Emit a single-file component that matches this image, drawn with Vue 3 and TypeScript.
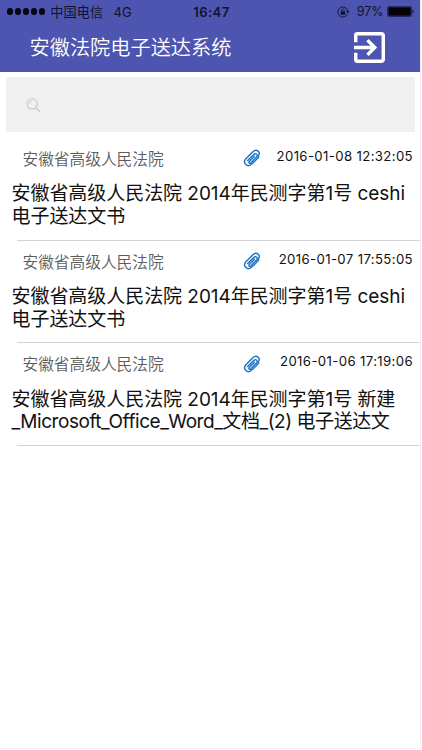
<script setup lang="ts">
interface Line {
  text: string
  tight?: boolean
}
interface Notice {
  court: string
  time: string
  lines: Line[]
}

const court = '安徽省高级人民法院'
const ceshi: Line[] = [{ text: '安徽省高级人民法院 2014年民测字第1号 ceshi' }, { text: '电子送达文书' }]
const notices: Notice[] = [
  { court, time: '2016-01-08 12:32:05', lines: ceshi },
  { court, time: '2016-01-07 17:55:05', lines: ceshi },
  {
    court,
    time: '2016-01-06 17:19:06',
    lines: [
      { text: '安徽省高级人民法院 2014年民测字第1号 新建' },
      { text: '_Microsoft_Office_Word_文档_(2) 电子送达文', tight: true },
    ],
  },
]
</script>

<template>
  <div class="screen">
    <header class="header">
      <div class="status">
        <div class="status-left">
          <span class="signal"><i v-for="n in 5" :key="n" class="dot"></i></span>
          <span class="carrier">中国电信</span>
          <span class="network">4G</span>
        </div>
        <span class="clock">16:47</span>
        <div class="status-right">
          <svg class="lock" viewBox="0 0 13 12" fill="none" stroke="#11132e">
            <path d="M10.6 7.6A5 5 0 1 1 10.8 5.2" stroke-width="0.9" />
            <path d="M9.3 5h3.2l-1.6 2.3z" fill="#11132e" stroke="none" />
            <rect x="3.7" y="5.3" width="4.4" height="3.4" rx="0.4" fill="#11132e" stroke="none" />
            <path d="M4.6 5.5V4.3a1.3 1.3 0 0 1 2.6 0v1.2" stroke-width="0.8" />
          </svg>
          <span class="percent">97%</span>
          <svg class="battery" viewBox="0 0 28 11">
            <rect x="0.4" y="0.4" width="24.2" height="10.2" rx="1.8" fill="none" stroke="#11132e" stroke-width="0.7" />
            <rect x="1.3" y="1.3" width="22.4" height="8.4" rx="0.9" fill="#020208" />
            <path d="M25.5 3.7c1.7.4 1.7 3.2 0 3.6z" fill="#11132e" />
          </svg>
        </div>
      </div>
      <div class="titlebar">
        <h1 class="title">安徽法院电子送达系统</h1>
        <svg class="exit" viewBox="3 3 18 18" fill="#fff">
          <path d="M10.09 15.59L11.5 17l5-5-5-5-1.41 1.41L12.67 11H3v2h9.67l-2.58 2.59zM19 3H5a2 2 0 0 0-2 2v4h2V5h14v14H5v-4H3v4a2 2 0 0 0 2 2h14c1.1 0 2-.9 2-2V5c0-1.1-.9-2-2-2z" />
        </svg>
      </div>
    </header>

    <div class="search">
      <svg class="magnifier" viewBox="0 0 16 16" fill="none" stroke="#c6c1c3">
        <circle cx="6.6" cy="6.3" r="5.5" stroke-width="1.1" />
        <path d="M10.5 10.2l4.3 4.3" stroke-width="1.3" />
        <path d="M3.4 6.2a3.3 3.3 0 0 1 2.9-2.9" stroke-width="0.8" />
      </svg>
    </div>

    <ul class="list">
      <li v-for="(n, i) in notices" :key="i" class="item">
        <div class="meta">
          <span class="court">{{ n.court }}</span>
          <svg class="clip" viewBox="0 0 18 18" fill="none" stroke="#1b72c2" stroke-width="1.4" stroke-linecap="round" stroke-linejoin="round">
            <path d="M4.2 10.8l6-6.1c2.1-2 4.7.4 2.9 2.4l-5.8 6c-1.2 1.1-2.6-.2-1.5-1.4l5.1-5.2" transform="translate(0.5 0.8)" />
            <path d="M15.8 8.1l-7 7c-4.2 4-9.6-1.1-5.9-5.3l7-7.1c4-3.6 8.4 1 5.1 4.7" />
          </svg>
          <span class="time">{{ n.time }}</span>
        </div>
        <div class="subject">
          <div v-for="(line, k) in n.lines" :key="k" class="line" :class="{ tight: line.tight }">{{ line.text }}</div>
        </div>
      </li>
    </ul>
  </div>
</template>

<style>
body {
  margin: 0;
  background: #fff;
}
</style>

<style scoped>
.screen {
  box-sizing: border-box;
  width: 421px;
  height: 749px;
  border-right: 1px solid #f3f3f8;
  border-bottom: 1px solid #f3f3f8;
  background: #fff;
  color: #111;
  font-family: Inter, "Noto Sans CJK SC", sans-serif;
  white-space: nowrap;
  overflow: hidden;
}
.header {
  height: 72px;
  background: #4d55b0;
}
.status {
  display: grid;
  grid-template-columns: 1fr auto 1fr;
  align-items: center;
  height: 23px;
  padding: 0 5px 0 7px;
  color: #11132e;
  font-size: 12.5px;
}
.status-left,
.status-right {
  display: flex;
  align-items: center;
}
.status-right {
  justify-content: flex-end;
}
.signal {
  display: flex;
  gap: 1.6px;
  margin-right: 5px;
}
.dot {
  width: 6.4px;
  height: 6.4px;
  border-radius: 50%;
  background: #050612;
}
.carrier {
  font-size: 13.2px;
  margin-right: 10.5px;
}
.network {
  font-size: 13px;
}
.clock {
  padding-left: 1px;
  font-weight: 600;
  font-size: 13px;
  letter-spacing: 0.45px;
}
.lock {
  width: 13px;
  height: 12px;
  margin-right: 7px;
}
.percent {
  margin-right: 3.5px;
}
.battery {
  width: 28px;
  height: 11px;
}
.titlebar {
  display: flex;
  align-items: center;
  justify-content: space-between;
  height: 48px;
  padding: 0 35.5px 0 29.5px;
}
.title {
  margin: 1px 0 0;
  color: #fff;
  font-size: 20.2px;
  font-weight: 350;
  line-height: 30px;
}
.exit {
  width: 31px;
  height: 31px;
}
.search {
  display: flex;
  align-items: center;
  height: 55px;
  margin: 5.4px 5px 0 6px;
  padding-left: 20px;
  box-sizing: border-box;
  background: #f0f0f0;
}
.magnifier {
  width: 15px;
  height: 15px;
  margin-top: 1px;
}
.list {
  margin: 5.6px 0 0;
  padding: 0;
  list-style: none;
}
.item {
  box-sizing: border-box;
  height: 102.6px;
  padding-top: 10px;
  background: linear-gradient(#d4d4d6, #d4d4d6) 17px 100% / 100% 1px no-repeat;
}
.meta {
  display: flex;
  height: 26px;
  padding: 0 7px 0 22.5px;
}
.court {
  width: 220.5px;
  color: #5c5c5c;
  font-size: 15.7px;
  font-weight: 350;
  line-height: 24px;
}
.clip {
  width: 18px;
  height: 18px;
  margin-top: 1.5px;
}
.time {
  margin-left: auto;
  font-size: 13.2px;
  line-height: 17px;
  letter-spacing: 0.37px;
}
.subject {
  margin-top: 9.5px;
  padding-left: 11.5px;
}
.line {
  font-size: 19px;
  line-height: 22.5px;
  letter-spacing: -0.05px;
}
.tight {
  letter-spacing: -0.46px;
}
</style>
